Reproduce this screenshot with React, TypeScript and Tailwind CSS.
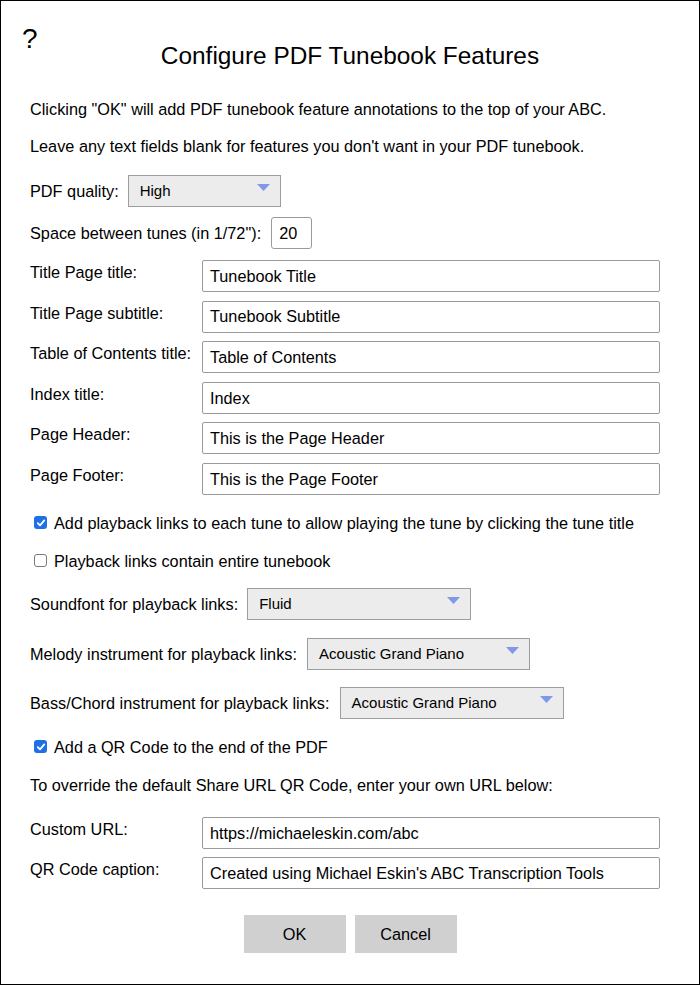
import React from "react";

const font = { fontFamily: '"Liberation Sans", Arial, Helvetica, sans-serif' };

function Select({ value, width }: { value: string; width: string }) {
  return (
    <div
      className={`relative flex h-[32px] items-center border border-[#9d9d9d] bg-[#ececec] pl-[11px] text-[15px] text-black ${width}`}
    >
      <span>{value}</span>
      <svg
        className="absolute right-[10px] top-[8px]"
        width="13"
        height="7"
        viewBox="0 0 13 7"
      >
        <polygon points="0,0 13,0 6.5,7" fill="#7f98ea" />
      </svg>
    </div>
  );
}

function TextRow({ label, value }: { label: string; value: string }) {
  return (
    <div className="flex items-start">
      <div className="w-[172px] pt-[2px] text-[16.3px] leading-[20px]">{label}</div>
      <div className="flex h-[32px] w-[458px] items-center rounded-[2px] border border-[#9a9a9a] bg-white pl-[7px] text-[16.25px]">
        {value}
      </div>
    </div>
  );
}

function Check({ checked, label }: { checked: boolean; label: string }) {
  return (
    <div className="flex h-[20px] items-center pl-[4px] text-[16.25px] leading-[20px]">
      {checked ? (
        <span className="flex h-[13px] w-[13px] items-center justify-center rounded-[3px] bg-[#1f6fe5]">
          <svg width="10" height="10" viewBox="0 0 10 10">
            <path d="M1.8 5.2 L4 7.4 L8.3 2.4" stroke="white" strokeWidth="1.8" fill="none" strokeLinecap="round" strokeLinejoin="round" />
          </svg>
        </span>
      ) : (
        <span className="h-[13px] w-[13px] rounded-[3px] border border-[#7a7a7a] bg-white" />
      )}
      <span className="ml-[7px]">{label}</span>
    </div>
  );
}

export default function App() {
  return (
    <div
      className="relative h-[985px] w-[700px] border border-black bg-white pl-[29px] text-black"
      style={font}
    >
      <div className="absolute left-[21px] top-[22px] text-[28px] leading-[32px]">?</div>
      <div className="mt-[41px] h-[28px] pr-[29px] text-center text-[24.4px] leading-[28px]">
        Configure PDF Tunebook Features
      </div>
      <div className="mt-[29px] text-[16.3px] leading-[20px]">
        Clicking "OK" will add PDF tunebook feature annotations to the top of your ABC.
      </div>
      <div className="mt-[17px] text-[16.3px] leading-[20px]">
        Leave any text fields blank for features you don't want in your PDF tunebook.
      </div>
      <div className="mt-[19px] flex items-center text-[16.3px]">
        <span className="mr-[9px]">PDF quality:</span>
        <Select value="High" width="w-[153px]" />
      </div>
      <div className="mt-[10px] flex items-center text-[16.3px]">
        <span className="mr-[10px]">Space between tunes (in 1/72"):</span>
        <div className="flex h-[32px] w-[41px] items-center rounded-[3px] border border-[#9a9a9a] pl-[7px] text-[16.25px]">20</div>
      </div>
      <div className="mt-[11px] flex flex-col gap-[8.6px]">
        <TextRow label="Title Page title:" value="Tunebook Title" />
        <TextRow label="Title Page subtitle:" value="Tunebook Subtitle" />
        <TextRow label="Table of Contents title:" value="Table of Contents" />
        <TextRow label="Index title:" value="Index" />
        <TextRow label="Page Header:" value="This is the Page Header" />
        <TextRow label="Page Footer:" value="This is the Page Footer" />
      </div>
      <div className="mt-[18px]">
        <Check checked label="Add playback links to each tune to allow playing the tune by clicking the tune title" />
      </div>
      <div className="mt-[18px]">
        <Check checked={false} label="Playback links contain entire tunebook" />
      </div>
      <div className="mt-[17px] flex items-center text-[16.3px]">
        <span className="mr-[9px]">Soundfont for playback links:</span>
        <Select value="Fluid" width="w-[224px]" />
      </div>
      <div className="mt-[18px] flex items-center text-[16.3px]">
        <span className="mr-[10px]">Melody instrument for playback links:</span>
        <Select value="Acoustic Grand Piano" width="w-[223px]" />
      </div>
      <div className="mt-[17px] flex items-center text-[16.3px]">
        <span className="mr-[10px]">Bass/Chord instrument for playback links:</span>
        <Select value="Acoustic Grand Piano" width="w-[224px]" />
      </div>
      <div className="mt-[18px]">
        <Check checked label="Add a QR Code to the end of the PDF" />
      </div>
      <div className="mt-[18px] text-[16.3px] leading-[20px]">
        To override the default Share URL QR Code, enter your own URL below:
      </div>
      <div className="mt-[22px] flex flex-col gap-[8px]">
        <TextRow label="Custom URL:" value="https://michaeleskin.com/abc" />
        <TextRow label="QR Code caption:" value="Created using Michael Eskin's ABC Transcription Tools" />
      </div>
      <div className="mt-[26px] flex justify-center gap-[9px] pr-[29px]">
        <div className="flex h-[38px] w-[102px] items-center justify-center bg-[#d0d0d0] text-[16.3px]">OK</div>
        <div className="flex h-[38px] w-[102px] items-center justify-center bg-[#d0d0d0] text-[16.3px]">Cancel</div>
      </div>
    </div>
  );
}
